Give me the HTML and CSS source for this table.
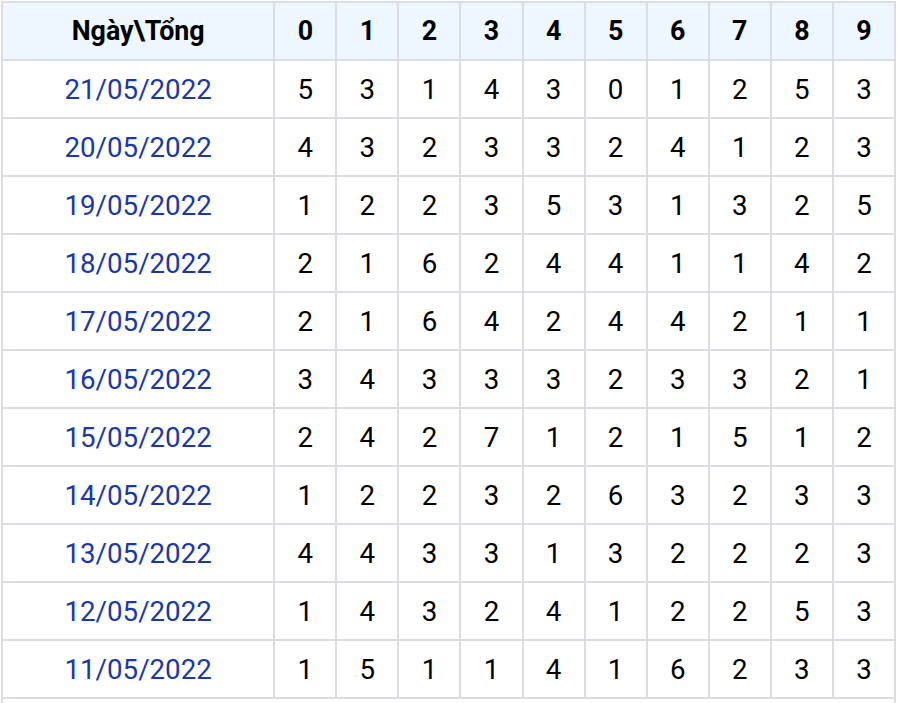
FILE: index.html
```html
<!DOCTYPE html>
<html lang="vi">
<head>
<meta charset="utf-8">
<title>Thống kê tổng</title>
<link rel="stylesheet" href="styles.css">
</head>
<body>
<table class="stats">
<colgroup>
<col class="c-date">
<col class="c-num"><col class="c-num"><col class="c-num"><col class="c-num"><col class="c-num">
<col class="c-num"><col class="c-num"><col class="c-num"><col class="c-num"><col class="c-num">
</colgroup>
<thead>
<tr><th>Ngày\Tổng</th><th>0</th><th>1</th><th>2</th><th>3</th><th>4</th><th>5</th><th>6</th><th>7</th><th>8</th><th>9</th></tr>
</thead>
<tbody>
<tr><td class="date">21/05/2022</td><td>5</td><td>3</td><td>1</td><td>4</td><td>3</td><td>0</td><td>1</td><td>2</td><td>5</td><td>3</td></tr>
<tr><td class="date">20/05/2022</td><td>4</td><td>3</td><td>2</td><td>3</td><td>3</td><td>2</td><td>4</td><td>1</td><td>2</td><td>3</td></tr>
<tr><td class="date">19/05/2022</td><td>1</td><td>2</td><td>2</td><td>3</td><td>5</td><td>3</td><td>1</td><td>3</td><td>2</td><td>5</td></tr>
<tr><td class="date">18/05/2022</td><td>2</td><td>1</td><td>6</td><td>2</td><td>4</td><td>4</td><td>1</td><td>1</td><td>4</td><td>2</td></tr>
<tr><td class="date">17/05/2022</td><td>2</td><td>1</td><td>6</td><td>4</td><td>2</td><td>4</td><td>4</td><td>2</td><td>1</td><td>1</td></tr>
<tr><td class="date">16/05/2022</td><td>3</td><td>4</td><td>3</td><td>3</td><td>3</td><td>2</td><td>3</td><td>3</td><td>2</td><td>1</td></tr>
<tr><td class="date">15/05/2022</td><td>2</td><td>4</td><td>2</td><td>7</td><td>1</td><td>2</td><td>1</td><td>5</td><td>1</td><td>2</td></tr>
<tr><td class="date">14/05/2022</td><td>1</td><td>2</td><td>2</td><td>3</td><td>2</td><td>6</td><td>3</td><td>2</td><td>3</td><td>3</td></tr>
<tr><td class="date">13/05/2022</td><td>4</td><td>4</td><td>3</td><td>3</td><td>1</td><td>3</td><td>2</td><td>2</td><td>2</td><td>3</td></tr>
<tr><td class="date">12/05/2022</td><td>1</td><td>4</td><td>3</td><td>2</td><td>4</td><td>1</td><td>2</td><td>2</td><td>5</td><td>3</td></tr>
<tr><td class="date">11/05/2022</td><td>1</td><td>5</td><td>1</td><td>1</td><td>4</td><td>1</td><td>6</td><td>2</td><td>3</td><td>3</td></tr>
</tbody>
<tfoot>
<tr><td class="foot" colspan="11"></td></tr>
</tfoot>
</table>
</body>
</html>
```
FILE: styles.css
```css
html, body {
  margin: 0;
  padding: 0;
  background: #ffffff;
  overflow: hidden;
}
body {
  padding: 1px 0 0 1px;
  font-family: Roboto, "Liberation Sans", Arial, sans-serif;
}
.stats {
  border-collapse: collapse;
  table-layout: fixed;
  width: 895px;
  border: 2px solid #dcdde2;
}
.c-date { width: 272px; }
.c-num { width: 62px; }
.stats th,
.stats td {
  border: 2px solid #dcdde2;
  height: 58px;
  padding: 0;
  text-align: center;
  vertical-align: middle;
  box-sizing: border-box;
}
.stats th {
  background: #eef6ff;
  color: #000000;
  font-weight: 700;
  font-size: 26.8px;
}
.stats td {
  color: #000000;
  font-size: 27.7px;
  font-weight: 400;
}
.stats td.date {
  color: #1a38a8;
}
.stats td.foot {
  height: 40px;
}
```
